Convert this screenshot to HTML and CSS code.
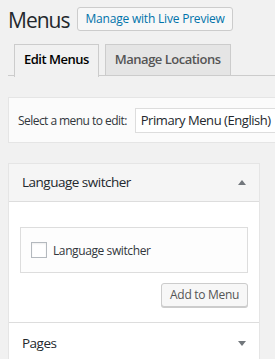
FILE: index.html
```html
<!DOCTYPE html>
<html>
<head>
<title>Menus</title>
<link rel="stylesheet" href="styles.css">
</head>
<body>
  <div class="wrap">
    <div class="head">
      <h1>Menus</h1>
      <a class="btn preview">Manage with Live Preview</a>
    </div>
    <div class="tabs">
      <a class="tab active">Edit Menus</a>
      <a class="tab">Manage Locations</a>
    </div>
    <div class="manage">
      <label class="manage_label">Select a menu to edit:</label>
      <div class="select">Primary Menu (English)<span class="caret"></span></div>
    </div>
    <div class="accordion">
      <div class="section open">
        <h3 class="section_title">Language switcher <span class="arrow up"></span></h3>
        <div class="section_body">
          <div class="checklist">
            <label class="check"><span class="box"></span>Language switcher</label>
          </div>
          <div class="actions">
            <a class="btn add">Add to Menu</a>
          </div>
        </div>
      </div>
      <div class="section">
        <h3 class="section_title">Pages <span class="arrow down"></span></h3>
      </div>
    </div>
  </div>
</body>
</html>
```
FILE: styles.css
```css
html, body {
  margin: 0;
  background-color: #f1f1f1;
  overflow: hidden;
}
body {
  font-family: "Open Sans", "Noto Sans", sans-serif;
  color: #23282d;
}
.wrap {
  padding: 7px 0 0 8px;
}
.head {
  display: flex;
  align-items: flex-start;
}
h1 {
  font-size: 21px;
  font-weight: 400;
  line-height: 24px;
  margin: 1px 8px 0 0;
  letter-spacing: -1px;
}
.btn {
  display: inline-block;
  background-color: #f7f7f7;
  border: 1px solid #ccc;
  border-radius: 3px;
  box-shadow: 0 1px 0 #ccc;
  font-size: 12px;
  line-height: 22px;
  padding: 0 8px;
  color: #555;
  white-space: nowrap;
}
.preview {
  color: #0073aa;
  box-shadow: none;
  padding: 0 7px;
  letter-spacing: -0.2px;
}
.tabs {
  display: flex;
  gap: 6px;
  margin-top: 12px;
  padding-left: 6px;
  border-bottom: 1px solid #ccc;
  height: 31px;
}
.tab {
  font-size: 13px;
  font-weight: 600;
  line-height: 29px;
  padding: 0 9px;
  border: 1px solid #ccc;
  border-bottom: none;
  background-color: #e5e5e5;
  color: #555;
  letter-spacing: -0.5px;
}
.tab.active {
  background-color: #f1f1f1;
  color: #000;
  height: 32px;
}
.manage {
  display: flex;
  align-items: center;
  width: 400px;
  margin-top: 21px;
  background-color: #fbfbfb;
  border: 1px solid #e5e5e5;
  height: 44px;
  padding-left: 9px;
}
.manage_label {
  font-size: 12px;
  letter-spacing: -0.55px;
  color: #32373c;
  margin-right: 8px;
}
.select {
  background-color: #fff;
  border: 1px solid #ddd;
  font-size: 13px;
  line-height: 23px;
  padding: 0 6px 0 5px;
  width: 160px;
  letter-spacing: -0.45px;
}
.caret {
  display: inline-block;
  margin-left: 4px;
  border: 4px solid transparent;
  border-top-color: #a0a5aa;
}
.accordion {
  width: 250px;
  margin-top: 20px;
  border: 1px solid #e5e5e5;
  background-color: #fff;
}
.section + .section {
  border-top: 1px solid #ddd;
}
.section_title {
  display: flex;
  justify-content: space-between;
  align-items: center;
  margin: 0;
  font-size: 13.5px;
  font-weight: 400;
  line-height: 21px;
  padding: 8px 13px 8px 13px;
  background-color: #f5f5f5;
  letter-spacing: -0.5px;
}
.open .section_title {
  border-bottom: 1px solid #ddd;
}
.section:not(.open) .section_title {
  background-color: #fff;
  padding-top: 10px;
}
.arrow {
  width: 0;
  height: 0;
  border-left: 4px solid transparent;
  border-right: 4px solid transparent;
}
.arrow.up {
  border-bottom: 5px solid #72777c;
}
.arrow.down {
  border-top: 5px solid #72777c;
}
.section_body {
  padding: 25px 11px 15px 11px;
}
.checklist {
  border: 1px solid #ddd;
  background-color: #fdfdfd;
  height: 44px;
  display: flex;
  align-items: center;
  padding-left: 10px;
}
.check {
  display: flex;
  align-items: center;
  font-size: 12px;
  color: #32373c;
  letter-spacing: -0.4px;
}
.box {
  width: 14px;
  height: 14px;
  border: 1px solid #b4b9be;
  background-color: #fff;
  margin-right: 6px;
  box-shadow: inset 0 1px 2px rgba(0, 0, 0, 0.07);
}
.actions {
  display: flex;
  justify-content: flex-end;
  margin-top: 10px;
}
.add {
  font-size: 12px;
  padding: 0 8px;
  letter-spacing: -0.3px;
}
```
